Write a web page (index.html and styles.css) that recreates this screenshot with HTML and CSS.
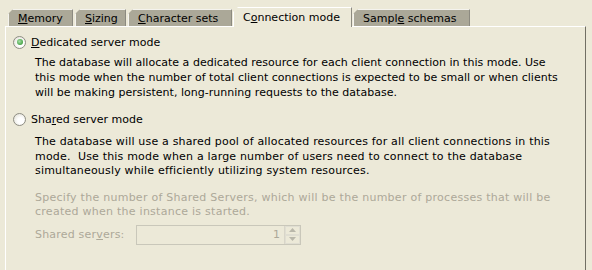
FILE: index.html
```html
<!DOCTYPE html>
<html>
<head>
<meta charset="utf-8">
<link rel="stylesheet" href="styles.css">
</head>
<body>
<div class="tabs">
  <div class="tab t-mem"><u>M</u>emory</div>
  <div class="tab t-siz"><u>S</u>izing</div>
  <div class="tab t-chr"><u>C</u>haracter sets</div>
  <div class="tab active t-con">C<u>o</u>nnection mode</div>
  <div class="tab t-smp">Sampl<u>e</u> schemas</div>
</div>
<div class="panel">
  <label class="radio-row">
    <span class="radio checked"></span>
    <span><u>D</u>edicated server mode</span>
  </label>
  <p class="desc first">The database will allocate a dedicated resource for each client connection in this mode. Use<br>this mode when the number of total client connections is expected to be small or when clients<br>will be making persistent, long-running requests to the database.</p>
  <label class="radio-row second">
    <span class="radio"></span>
    <span>Sha<u>r</u>ed server mode</span>
  </label>
  <p class="desc second-desc">The database will use a shared pool of allocated resources for all client connections in this<br>mode.&nbsp; Use this mode when a large number of users need to connect to the database<br>simultaneously while efficiently utilizing system resources.</p>
  <p class="desc disabled info">Specify the number of Shared Servers, which will be the number of processes that will be<br>created when the instance is started.</p>
  <div class="field-row disabled">
    <span class="field-label">Shared ser<u>v</u>ers:</span>
    <div class="spinner">
      <span class="spin-value">1</span>
      <span class="spin-buttons">
        <span class="spin-btn"><svg width="7" height="4" viewBox="0 0 7 4"><path d="M0 4 L3.5 0 L7 4 Z" fill="#B9B7AA"/></svg></span>
        <span class="spin-btn"><svg width="7" height="4" viewBox="0 0 7 4"><path d="M0 0 L3.5 4 L7 0 Z" fill="#B9B7AA"/></svg></span>
      </span>
    </div>
  </div>
</div>
</body>
</html>
```
FILE: styles.css
```css
html, body {
  margin: 0;
  padding: 0;
  background: #ECE9D8;
  height: 270px;
  overflow: hidden;
}
body {
  font-family: "DejaVu Sans", sans-serif;
  font-size: 11px;
  color: #000;
}
u { text-decoration: underline; text-underline-offset: 1px; }

.tabs {
  display: flex;
  align-items: flex-end;
  padding: 8px 0 0 8px;
  height: 18px;
  gap: 2px;
}
.tab {
  height: 17px;
  line-height: 17px;
  padding: 0 0 0 9px;
  background: #ABA898;
  border-top: 1px solid #F4F3EE;
  border-left: 1px solid #F4F3EE;
  border-right: 1px solid #8C8A80;
  clip-path: polygon(5px 0, 100% 0, 100% 100%, 0 100%, 0 5px);
  white-space: nowrap;
  box-sizing: border-box;
  overflow: hidden;
}
.tab.active {
  height: 20px;
  line-height: 19px;
  background: #ECE9D8;
  margin-bottom: -1px;
  border-color: #FFFFFF;
  border-right-color: #8C8A80;
  position: relative;
  z-index: 2;
}
.t-mem { width: 65px; }
.t-siz { width: 51px; }
.t-chr { width: 104px; }
.t-con { width: 119px; margin-left: -1px; }
.t-smp { width: 117px; margin-left: -1px; }

.panel {
  margin: 0 6px 0 5px;
  height: 260px;
  border-top: 1px solid #FFFFFF;
  border-left: 1px solid #FFFFFF;
  border-right: 1px solid #716F64;
  box-sizing: border-box;
  padding: 7px 0 0 7px;
}
.radio-row {
  display: flex;
  align-items: center;
  gap: 5px;
  height: 16px;
}
.radio-row.second { margin-top: 11px; }
.radio {
  width: 13px;
  height: 13px;
  border: 1px solid #8E8D83;
  border-radius: 50%;
  box-sizing: border-box;
  background: radial-gradient(circle at 60% 60%, #FFFFFF 30%, #DCDACE 100%);
  display: flex;
  align-items: center;
  justify-content: center;
}
.radio.checked::after {
  content: "";
  width: 6px;
  height: 6px;
  border-radius: 50%;
  background: radial-gradient(circle at 40% 40%, #A6E0A6 0%, #3B9B3B 80%);
}
.desc {
  margin: 5px 0 0 22px;
  line-height: 15px;
  white-space: nowrap;
  letter-spacing: 0.18px;
}
.desc.first { letter-spacing: 0.02px; }
.desc.second-desc { margin-top: 8px; line-height: 14.5px; }
.desc.info { margin-top: 12px; letter-spacing: 0.26px; line-height: 14.5px; }
.disabled { color: #ACA899; }
.field-row {
  display: flex;
  align-items: center;
  margin: 5px 0 0 22px;
  height: 20px;
}
.field-label { width: 101px; letter-spacing: 0.2px; }
.spinner {
  width: 165px;
  height: 20px;
  border: 1px solid #C9C7BA;
  box-sizing: border-box;
  display: flex;
  align-items: center;
  justify-content: flex-end;
}
.spin-value { padding-right: 4px; }
.spin-buttons {
  display: flex;
  flex-direction: column;
  width: 15px;
  height: 18px;
  border-left: 1px solid #D8D5C8;
}
.spin-btn {
  flex: 1;
  display: flex;
  align-items: center;
  justify-content: center;
  border: 1px solid #E0DED2;
}
```
